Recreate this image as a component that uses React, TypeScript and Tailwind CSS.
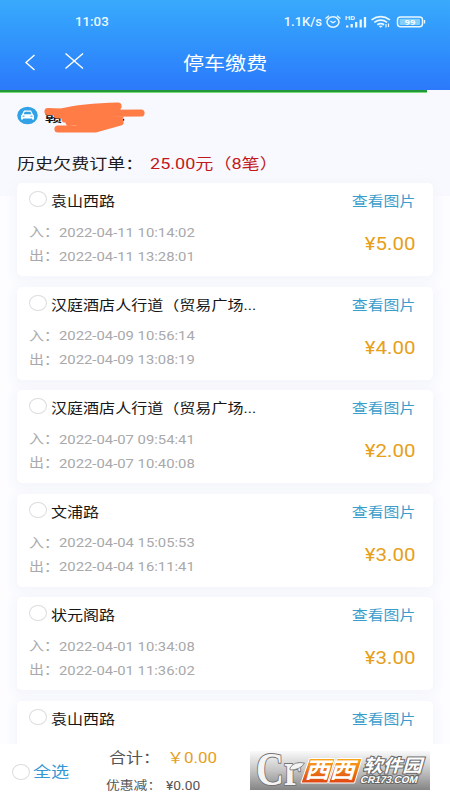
import React from 'react';

const FONT = 'font-["Roboto","Noto_Sans_CJK_SC",sans-serif]';

type OrderData = { name: string; inAt?: string; outAt?: string; price?: string };

const orders: OrderData[] = [
  { name: '袁山西路', inAt: '2022-04-11 10:14:02', outAt: '2022-04-11 13:28:01', price: '¥5.00' },
  { name: '汉庭酒店人行道（贸易广场...', inAt: '2022-04-09 10:56:14', outAt: '2022-04-09 13:08:19', price: '¥4.00' },
  { name: '汉庭酒店人行道（贸易广场...', inAt: '2022-04-07 09:54:41', outAt: '2022-04-07 10:40:08', price: '¥2.00' },
  { name: '文浦路', inAt: '2022-04-04 15:05:53', outAt: '2022-04-04 16:11:41', price: '¥3.00' },
  { name: '状元阁路', inAt: '2022-04-01 10:34:08', outAt: '2022-04-01 11:36:02', price: '¥3.00' },
  { name: '袁山西路' },
];

function Wide({ className = '', children }: { className?: string; children: React.ReactNode }) {
  return <span className={`block shrink-0 whitespace-nowrap ${className}`}>{children}</span>;
}

function Radio() {
  return <span className="block h-4 w-[18px] shrink-0 rounded-[50%] border border-[#dcdcdf] bg-white" />;
}

function StatusIcons() {
  return (
    <svg width="108" height="18" viewBox="0 0 108 18" fill="none" stroke="#e9f8ff" className="shrink-0">
      <ellipse cx="9" cy="9" rx="6" ry="5.200" strokeWidth="1.500" />
      <path d="M1.500 5.500 5 2.800M16.500 5.500 13 2.800M6.400 7.900 9 9.800l2.600-1.800" strokeWidth="1.300" />
      <text x="21" y="6.700" fontSize="5.500" fontWeight="700" fill="#e9f8ff" stroke="none" textLength="10" lengthAdjust="spacingAndGlyphs" fontFamily="Roboto">HD</text>
      <path d="M23.200 14.500v-2M27.700 14.500v-3.500M32.200 14.500V9M36.700 14.500V6.500M41 14.500V4" strokeWidth="2.300" />
      <path d="M47.500 6.900q9.200-6.600 18.400 0M50.300 9.400q6.400-4.500 12.800 0M53.300 11.800q3.400-2.400 6.800 0" strokeWidth="1.700" />
      <path d="M55 13h3.400l-1.700 1.500z" fill="#e9f8ff" strokeWidth=".5" />
      <path d="M62 11v3.500M64.500 10.500v3.500" strokeWidth="1.200" />
      <rect x="73.500" y="4" width="25" height="9.800" rx="3" strokeWidth="1.500" />
      <rect x="75.500" y="5.800" width="20.500" height="6.200" rx="1" fill="#82cffb" stroke="none" />
      <path d="M100.500 7v3.500" strokeWidth="1.400" />
      <text x="80.500" y="11.800" fontSize="8" fontWeight="700" fill="#f4fcff" stroke="none" textLength="11" lengthAdjust="spacingAndGlyphs" fontFamily="Roboto">99</text>
    </svg>
  );
}

function TimeRow({ label, value }: { label: string; value: string }) {
  return (
    <div className="flex h-6 items-center text-[#a9a9ab]">
      <Wide className="w-[29.500px] origin-left scale-x-[1.15] text-[13px] leading-5">{label}</Wide>
      <Wide className="origin-left scale-x-[1.125] pt-px text-[13.200px] leading-5">{value}</Wide>
    </div>
  );
}

function Order({ o }: { o: OrderData }) {
  return (
    <article className="flex h-[93px] shrink-0 justify-between rounded-[5px] bg-white pl-3 pr-[18px] pt-2 shadow-[0_2px_12px_3px_#f3f5fb]">
      <div>
        <div className="flex h-5 items-start gap-1">
          <Radio />
          <Wide className="origin-left scale-x-[1.18] text-[13.600px] leading-5 text-[#161616]">{o.name}</Wide>
        </div>
        <div className="mt-[9px]">
          {o.inAt && <TimeRow label="入：" value={o.inAt} />}
          {o.outAt && <TimeRow label="出：" value={o.outAt} />}
        </div>
      </div>
      <div className="flex flex-col items-end">
        <Wide className="origin-right scale-x-[1.17] text-[13.600px] leading-5 text-[#3b9dcb]">查看图片</Wide>
        {o.price && <Wide className="-mr-px mt-[21px] origin-right scale-x-[1.14] text-[18px] leading-6 text-[#e6a019]">{o.price}</Wide>}
      </div>
    </article>
  );
}

function Watermark() {
  return (
    <svg width="180" height="39" viewBox="0 0 180 39" className="shrink-0">
      <defs>
        <linearGradient id="plate" x1="0" y1="0" x2="0" y2="1">
          <stop offset="0" stopColor="#fafafa" /><stop offset=".5" stopColor="#c4c4c4" /><stop offset="1" stopColor="#858585" />
        </linearGradient>
        <linearGradient id="tile" x1="0" y1="0" x2="0" y2="1">
          <stop offset="0" stopColor="#f9a91c" /><stop offset="1" stopColor="#df4512" />
        </linearGradient>
      </defs>
      <rect width="180" height="39" fill="url(#plate)" />
      <text x="6" y="34" fontSize="46" fontWeight="700" fontFamily="Liberation Serif" fill="#f4f4f4" stroke="#747474" strokeWidth="2" strokeLinejoin="round" paintOrder="stroke" textLength="45" lengthAdjust="spacingAndGlyphs">Cr</text>
      <path d="M40 17q4-7 14.500-5-4 7-14.500 7z" fill="#f4f4f4" stroke="#747474" strokeWidth=".8" />
      <path d="M59.500 7.500H85L77.500 32H51zM87 7.500h25L104.500 32H78.500z" fill="url(#tile)" stroke="#fff" />
      <g transform="skewX(-16)" fontFamily="Noto Sans CJK SC" fontWeight="700" fill="#fff">
        <text x="62.500" y="27.500" fontSize="22" textLength="50" lengthAdjust="spacingAndGlyphs">西西</text>
        <g stroke="#686868" strokeWidth="2" paintOrder="stroke">
          <text x="119" y="21.500" fontSize="18" textLength="59" lengthAdjust="spacingAndGlyphs">软件园</text>
          <text x="119" y="32" fontSize="10" fontFamily="Liberation Sans" textLength="57" lengthAdjust="spacingAndGlyphs">CR173.COM</text>
        </g>
      </g>
    </svg>
  );
}

export default function App() {
  return (
    <main className={`flex h-[800px] w-[450px] flex-col overflow-hidden bg-white ${FONT}`}>
      <header className="h-[90px] shrink-0 bg-linear-to-b from-[#39aafc] to-[#2c79fb] text-white">
        <div className="flex h-10 items-center justify-between pl-[75px] pr-[18px] pt-[3px] text-[#eaf8ff]">
          <Wide className="text-[13.300px] font-medium">11:03</Wide>
          <div className="flex items-center">
            <Wide className="text-[13px] font-medium">1.1K/s</Wide>
            <span className="w-0.5" />
            <StatusIcons />
          </div>
        </div>
        <div className="flex h-[46px] items-center pl-[24px]">
          <svg width="62" height="20" viewBox="0 0 62 20" fill="none" stroke="#fff" strokeWidth="1.400" className="shrink-0">
            <path d="M10.500 2 2 9.500l8.500 7.500M41.500 .5 59 15.500M59 .5 41.500 15.500" />
          </svg>
          <Wide className="ml-[97px] origin-left scale-x-[1.17] text-[18px]">停车缴费</Wide>
        </div>
      </header>

      <section className="h-[654px] shrink-0 overflow-hidden bg-[linear-gradient(#f8f9fe_0_106px,#fdfdff_106px)]">
        <div className="h-[3px] w-[427px] border-b border-[#79dc7c] bg-[#22983a]" />
        <div className="flex h-[52px] items-center pl-[17px]">
          <svg width="135" height="34" viewBox="0 0 135 34" className="shrink-0">
            <ellipse cx="10.500" cy="13.500" rx="10.300" ry="8.800" fill="#32a2e7" />
            <path d="M7 8.500h7l2 4 1 1V17.500h-2V16.500H6v1H4V13.500l1-1z" fill="#fff" />
            <path d="M7.700 9.700h5.700l1 2.500H6.700z" fill="#32a2e7" />
            <path d="M5.500 14.200h2M13.500 14.200h2" stroke="#32a2e7" />
            <text x="28" y="19" fontSize="13" fontWeight="700" fill="#111" fontFamily="Noto Sans CJK SC" textLength="17" lengthAdjust="spacingAndGlyphs">赣</text>
            <path d="M105 18.800l2-1.500" stroke="#111" strokeWidth="1.800" />
            <path d="M31 9.500 44 10Q65 5 101 4M40 13 100 11M60 11.500 124 11M48 17 103 14M52 20 94 18M41 27 78 27 103 20 100 8M60 20 94 20" fill="none" stroke="#ff7c46" strokeWidth="7.200" strokeLinecap="round" strokeLinejoin="round" />
          </svg>
        </div>
        <div className="flex h-[38px] items-start pl-[17px] pt-[6.500px] text-[15.300px] leading-6">
          <Wide className="w-[133px] origin-left scale-x-[1.18] text-[#1c1c1c]">历史欠费订单：</Wide>
          <Wide className="origin-left scale-x-[1.18] text-[#c2181c]">25.00元（8笔）</Wide>
        </div>
        <div className="flex flex-col gap-[10.500px] px-[17px]">
          {orders.map((o, i) => <Order key={i} o={o} />)}
        </div>
      </section>

      <footer className="flex h-14 shrink-0 bg-white pl-3">
        <div className="flex h-14 w-[94px] items-center gap-[3px]">
          <Radio />
          <Wide className="origin-left scale-x-[1.18] text-[15.300px] leading-5 text-[#3498d7]">全选</Wide>
        </div>
        <div className="w-[144px] text-[#555]">
          <div className="flex h-7 items-center pl-[3px] pt-px">
            <Wide className="w-[58px] origin-left scale-x-[1.17] text-[14.500px] leading-5">合计：</Wide>
            <Wide className="origin-left scale-x-[1.17] text-[14.500px] leading-5 text-[#e6a019]">￥0.00</Wide>
          </div>
          <div className="flex h-7 items-center">
            <Wide className="w-[60px] origin-left scale-x-[1.15] text-[12px] leading-4">优惠减：</Wide>
            <Wide className="origin-left scale-x-[1.15] text-[12px] leading-4">¥0.00</Wide>
          </div>
        </div>
        <div className="pt-[7px]"><Watermark /></div>
      </footer>
    </main>
  );
}
